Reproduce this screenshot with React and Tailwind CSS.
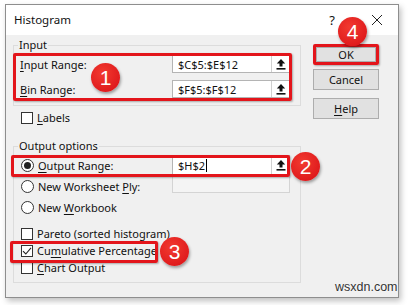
import React from "react";

function Arrow() {
  return (
    <svg width="10" height="12" viewBox="0 0 10 12">
      <path d="M5 1 L0.8 5.6 H3.5 V8.6 H6.5 V5.6 H9.2 Z" fill="#111" />
      <rect x="0.5" y="10" width="9" height="1.6" fill="#111" />
    </svg>
  );
}

function RefBox({ value, cursor }) {
  return (
    <div className="flex w-[118px] h-full border border-[#b4b4b4] bg-white">
      <div className="flex-1 flex items-center pl-[5px] text-[#111]">
        <span>{value}</span>
        {cursor && <span className="inline-block w-px h-[13px] bg-black ml-px" />}
      </div>
      <div className="w-[18px] h-full border-l border-[#d0d0d0] flex items-center justify-center">
        <Arrow />
      </div>
    </div>
  );
}

function Check({ checked }) {
  return (
    <div className="w-[12px] h-[12px] border border-[#333] bg-white flex items-center justify-center shrink-0">
      {checked && (
        <svg width="10" height="10" viewBox="0 0 10 10">
          <path d="M1 5.2 L3.8 8 L9 1.8" fill="none" stroke="#222" strokeWidth="1.1" />
        </svg>
      )}
    </div>
  );
}

function Radio({ on }) {
  return (
    <div className="w-[13px] h-[13px] rounded-full border border-[#333] bg-white flex items-center justify-center shrink-0">
      {on && <div className="w-[7px] h-[7px] rounded-full bg-[#222]" />}
    </div>
  );
}

function U({ children }) {
  return <span className="underline underline-offset-[2px] decoration-1">{children}</span>;
}

function Btn({ children }) {
  return (
    <div className="h-full w-full bg-[#e1e1e1] border border-[#adadad] flex items-center justify-center text-[#111]">
      {children}
    </div>
  );
}

function Circle({ n, className }) {
  return (
    <div
      className={
        "absolute w-[29px] h-[29px] rounded-full bg-[radial-gradient(circle_at_40%_35%,#f23a30,#d80f15)] shadow-[1px_2px_3px_rgba(0,0,0,0.35)] flex items-center justify-center text-white text-[21px] leading-none " +
        className
      }
      style={{ fontFamily: '"Liberation Sans", Arial, sans-serif' }}
    >
      {n}
    </div>
  );
}

export default function App() {
  return (
    <div
      className="relative w-[409px] h-[305px] bg-white overflow-hidden text-[11px] leading-none text-[#111]"
      style={{ fontFamily: '"Noto Sans", "Open Sans", sans-serif' }}
    >
      <div className="pt-[4px] pl-[5px]">
        <div className="w-[394px] h-[294px] border border-[#8e8e8e] shadow-[2px_3px_6px_rgba(0,0,0,0.25)] flex flex-col">
          {/* title bar */}
          <div className="h-[30px] bg-white flex items-center pl-[8px] shrink-0">
            <span className="text-[11.5px]">Histogram</span>
            <span className="ml-auto text-[13px] mr-[36px]">?</span>
            <svg width="12" height="12" viewBox="0 0 12 12" className="mr-[15px]">
              <path d="M1 1 L11 11 M11 1 L1 11" stroke="#222" strokeWidth="1" />
            </svg>
          </div>
          {/* body */}
          <div className="flex-1 bg-[#f0f0f0] flex">
            {/* left */}
            <div className="pl-[7px] w-[295px] flex flex-col">
              {/* Input group */}
              <div className="mt-[10px] h-[61px] border border-[#dcdcdc] flex flex-col">
                <span className="-mt-[9px] h-[16px] leading-[16px] ml-[4px] px-px bg-[#f0f0f0] self-start">Input</span>
                <div className="mt-[2px] h-[18px] flex items-center pl-[6px]">
                  <span className="w-[152px]"><U>I</U>nput Range:</span>
                  <RefBox value="$C$5:$E$12" />
                </div>
                <div className="mt-[7px] h-[18px] flex items-center pl-[6px]">
                  <span className="w-[152px]"><U>B</U>in Range:</span>
                  <RefBox value="$F$5:$F$12" />
                </div>
              </div>
              {/* Labels */}
              <div className="mt-[5px] h-[13px] flex items-center pl-[8px] gap-[4px]">
                <Check />
                <span><U>L</U>abels</span>
              </div>
              {/* Output group */}
              <div className="mt-[22px] h-[137px] border border-[#dcdcdc] flex flex-col">
                <span className="-mt-[9px] h-[16px] leading-[16px] ml-[4px] px-px bg-[#f0f0f0] self-start">Output options</span>
                <div className="mt-[1px] flex">
                  <div className="w-[158px] flex flex-col pl-[7px]">
                    <div className="h-[21px] flex items-center gap-[4px]">
                      <Radio on />
                      <span><U>O</U>utput Range:</span>
                    </div>
                    <div className="h-[21px] flex items-center gap-[4px]">
                      <Radio />
                      <span>New Worksheet <U>P</U>ly:</span>
                    </div>
                    <div className="h-[21px] flex items-center gap-[4px]">
                      <Radio />
                      <span>New <U>W</U>orkbook</span>
                    </div>
                  </div>
                  <div className="flex flex-col">
                    <div className="h-[20px]">
                      <RefBox value="$H$2" cursor />
                    </div>
                    <div className="-mt-px w-[118px] h-[19px] border border-[#d4d4d4] bg-[#f4f4f4]" />
                  </div>
                </div>
                <div className="mt-[7px] h-[17px] flex items-center pl-[7px] gap-[4px]">
                  <Check />
                  <span>Pareto (sorted histogram)</span>
                </div>
                <div className="h-[17px] flex items-center pl-[7px] gap-[4px]">
                  <Check checked />
                  <span>Cu<U>m</U>ulative Percentage</span>
                </div>
                <div className="h-[17px] flex items-center pl-[7px] gap-[4px]">
                  <Check />
                  <span><U>C</U>hart Output</span>
                </div>
              </div>
            </div>
            {/* right buttons */}
            <div className="ml-[12px] w-[66px] flex flex-col">
              <div className="mt-[9px] h-[21px] border-[3px] border-[#e3151b] rounded-[2px] shadow-[1px_1px_2px_rgba(0,0,0,0.3)]">
                <Btn>OK</Btn>
              </div>
              <div className="mt-[4px] h-[21px]">
                <Btn>Cancel</Btn>
              </div>
              <div className="mt-[8px] h-[21px]">
                <Btn><span><U>H</U>elp</span></Btn>
              </div>
            </div>
          </div>
        </div>
      </div>

      {/* annotation overlays */}
      <div className="absolute left-[13px] top-[53px] w-[279px] h-[48px] border-[3px] border-[#e3151b] rounded-[2px] shadow-[1px_1px_2px_rgba(0,0,0,0.3)]" />
      <div className="absolute left-[11px] top-[155px] w-[279px] h-[22px] border-[3px] border-[#e3151b] rounded-[2px] shadow-[1px_1px_2px_rgba(0,0,0,0.3)]" />
      <div className="absolute left-[10px] top-[241px] w-[148px] h-[22px] border-[3px] border-[#e3151b] rounded-[2px] shadow-[1px_1px_2px_rgba(0,0,0,0.3)]" />
      <Circle n="1" className="left-[91px] top-[63px]" />
      <Circle n="2" className="left-[291px] top-[152px]" />
      <Circle n="3" className="left-[160px] top-[237px]" />
      <Circle n="4" className="left-[338px] top-[17px]" />
      <div
        className="absolute left-[335px] top-[281px] text-[12.5px] leading-none text-[#333]"
        style={{ fontFamily: '"Liberation Sans", Arial, sans-serif', textShadow: "0 0 2px #fff" }}
      >
        wsxdn.com
      </div>
    </div>
  );
}
